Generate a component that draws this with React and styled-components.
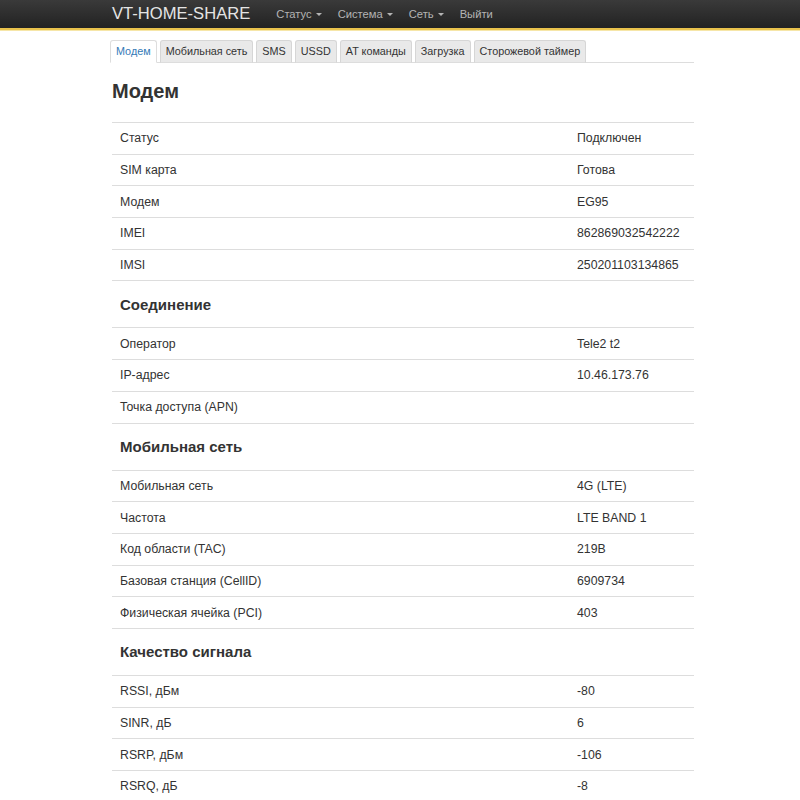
import React from "react";
import styled, { createGlobalStyle } from "styled-components";

const Global = createGlobalStyle`
  html, body { margin: 0; padding: 0; background: #fff; }
  body { font-family: "Liberation Sans", Arial, sans-serif; color: #333; }
  * { box-sizing: border-box; }
`;

const Navbar = styled.header`
  height: 30px;
  background: linear-gradient(to bottom, #3a3a3a 0%, #222 100%);
  border-bottom: 2px solid #e8c24c;
  box-shadow: 0 1px 0 #f6e6a8;
`;

const NavInner = styled.div`
  width: 582px;
  margin-left: 112px;
  height: 28px;
  display: flex;
  align-items: center;
`;

const Brand = styled.div`
  font-size: 16.6px;
  color: #e4e4e4;
  margin-right: 18px;
  line-height: 26px;
`;

const NavItem = styled.div`
  font-size: 11.2px;
  color: #b4b4b4;
  padding: 0 8px;
  display: flex;
  align-items: center;
  gap: 4px;
  line-height: 26px;
`;

const Caret = styled.span`
  display: inline-block;
  width: 0;
  height: 0;
  border-left: 3.5px solid transparent;
  border-right: 3.5px solid transparent;
  border-top: 3.5px solid #b4b4b4;
  margin-top: 1px;
`;

const Container = styled.main`
  width: 582px;
  margin-left: 112px;
  padding-top: 10px;
`;

const Tabs = styled.nav`
  display: flex;
  gap: 3px;
  margin-left: -2px;
  border-bottom: 1px solid #ddd;
  height: 23px;
`;

const Tab = styled.div`
  height: 23px;
  padding: 0 5px;
  font-size: 10.8px;
  line-height: 21px;
  border: 1px solid ${(p) => (p.$active ? "#ddd" : "#d6d6d6")};
  border-bottom-color: ${(p) => (p.$active ? "#fff" : "#ddd")};
  border-radius: 3px 3px 0 0;
  background: ${(p) => (p.$active ? "#fff" : "#e9e9e9")};
  color: ${(p) => (p.$active ? "#337ab7" : "#333")};
  white-space: nowrap;
`;

const Title = styled.h2`
  margin: 0;
  font-size: 20px;
  font-weight: bold;
  color: #333;
  line-height: 22px;
  padding-top: 17px;
  padding-bottom: 20px;
`;

const Table = styled.div`
  display: grid;
  grid-template-columns: 457px 1fr;
  font-size: 12.3px;
  color: #333;
`;

const Cell = styled.div`
  border-top: 1px solid #ddd;
  padding: 0 8px;
  height: 31.7px;
  display: flex;
  align-items: center;
`;

const Section = styled.div`
  grid-column: 1 / -1;
  border-top: 1px solid #ddd;
  padding: 0 8px;
  height: 47px;
  display: flex;
  align-items: center;
  font-size: 15px;
  font-weight: bold;
  color: #333;
`;

const data = [
  { rows: [["Статус", "Подключен"], ["SIM карта", "Готова"], ["Модем", "EG95"], ["IMEI", "862869032542222"], ["IMSI", "250201103134865"]] },
  { title: "Соединение", rows: [["Оператор", "Tele2 t2"], ["IP-адрес", "10.46.173.76"], ["Точка доступа (APN)", ""]] },
  { title: "Мобильная сеть", rows: [["Мобильная сеть", "4G (LTE)"], ["Частота", "LTE BAND 1"], ["Код области (TAC)", "219B"], ["Базовая станция (CellID)", "6909734"], ["Физическая ячейка (PCI)", "403"]] },
  { title: "Качество сигнала", rows: [["RSSI, дБм", "-80"], ["SINR, дБ", "6"], ["RSRP, дБм", "-106"], ["RSRQ, дБ", "-8"]] },
];

const tabs = ["Модем", "Мобильная сеть", "SMS", "USSD", "AT команды", "Загрузка", "Сторожевой таймер"];

export default function App() {
  return (
    <>
      <Global />
      <Navbar>
        <NavInner>
          <Brand>VT-HOME-SHARE</Brand>
          <NavItem>Статус <Caret /></NavItem>
          <NavItem>Система <Caret /></NavItem>
          <NavItem>Сеть <Caret /></NavItem>
          <NavItem>Выйти</NavItem>
        </NavInner>
      </Navbar>
      <Container>
        <Tabs>
          {tabs.map((t, i) => (
            <Tab key={t} $active={i === 0}>{t}</Tab>
          ))}
        </Tabs>
        <Title>Модем</Title>
        <Table>
          {data.map((s, si) => (
            <React.Fragment key={si}>
              {s.title && <Section>{s.title}</Section>}
              {s.rows.map(([k, v]) => (
                <React.Fragment key={k}>
                  <Cell>{k}</Cell>
                  <Cell>{v}</Cell>
                </React.Fragment>
              ))}
            </React.Fragment>
          ))}
        </Table>
      </Container>
    </>
  );
}
